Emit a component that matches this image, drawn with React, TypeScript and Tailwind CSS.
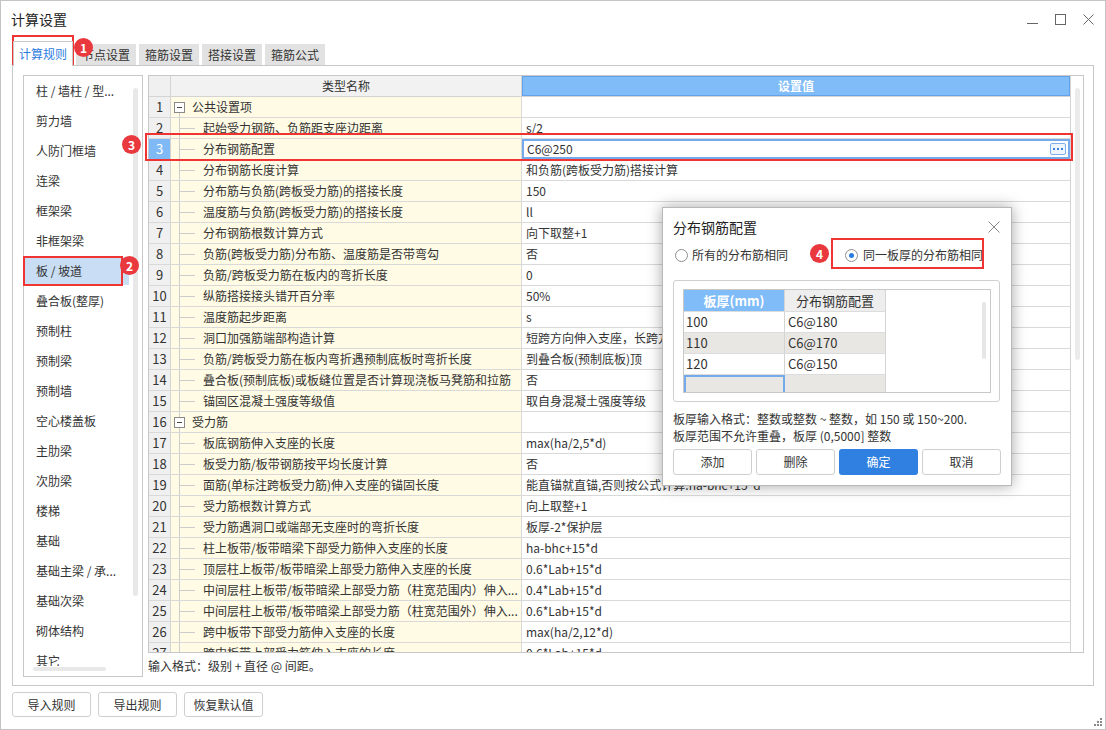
import React from 'react';

type Row = { name: string; value: string; group?: boolean };

const rows: Row[] = [
  { name: '公共设置项', value: '', group: true },
  { name: '起始受力钢筋、负筋距支座边距离', value: 's/2' },
  { name: '分布钢筋配置', value: 'C6@250' },
  { name: '分布钢筋长度计算', value: '和负筋(跨板受力筋)搭接计算' },
  { name: '分布筋与负筋(跨板受力筋)的搭接长度', value: '150' },
  { name: '温度筋与负筋(跨板受力筋)的搭接长度', value: 'll' },
  { name: '分布钢筋根数计算方式', value: '向下取整+1' },
  { name: '负筋(跨板受力筋)分布筋、温度筋是否带弯勾', value: '否' },
  { name: '负筋/跨板受力筋在板内的弯折长度', value: '0' },
  { name: '纵筋搭接接头错开百分率', value: '50%' },
  { name: '温度筋起步距离', value: 's' },
  { name: '洞口加强筋端部构造计算', value: '短跨方向伸入支座，长跨方向伸入支座' },
  { name: '负筋/跨板受力筋在板内弯折遇预制底板时弯折长度', value: '到叠合板(预制底板)顶' },
  { name: '叠合板(预制底板)或板缝位置是否计算现浇板马凳筋和拉筋', value: '否' },
  { name: '锚固区混凝土强度等级值', value: '取自身混凝土强度等级' },
  { name: '受力筋', value: '', group: true },
  { name: '板底钢筋伸入支座的长度', value: 'max(ha/2,5*d)' },
  { name: '板受力筋/板带钢筋按平均长度计算', value: '否' },
  { name: '面筋(单标注跨板受力筋)伸入支座的锚固长度', value: '能直锚就直锚,否则按公式计算:ha-bhc+15*d' },
  { name: '受力筋根数计算方式', value: '向上取整+1' },
  { name: '受力筋遇洞口或端部无支座时的弯折长度', value: '板厚-2*保护层' },
  { name: '柱上板带/板带暗梁下部受力筋伸入支座的长度', value: 'ha-bhc+15*d' },
  { name: '顶层柱上板带/板带暗梁上部受力筋伸入支座的长度', value: '0.6*Lab+15*d' },
  { name: '中间层柱上板带/板带暗梁上部受力筋（柱宽范围内）伸入...', value: '0.4*Lab+15*d' },
  { name: '中间层柱上板带/板带暗梁上部受力筋（柱宽范围外）伸入...', value: '0.6*Lab+15*d' },
  { name: '跨中板带下部受力筋伸入支座的长度', value: 'max(ha/2,12*d)' },
  { name: '跨中板带上部受力筋伸入支座的长度', value: '0.6*Lab+15*d' },
];

const sideItems = [
  '柱 / 墙柱 / 型...',
  '剪力墙',
  '人防门框墙',
  '连梁',
  '框架梁',
  '非框架梁',
  '板 / 坡道',
  '叠合板(整厚)',
  '预制柱',
  '预制梁',
  '预制墙',
  '空心楼盖板',
  '主肋梁',
  '次肋梁',
  '楼梯',
  '基础',
  '基础主梁 / 承...',
  '基础次梁',
  '砌体结构',
  '其它',
];

const tabs = ['计算规则', '节点设置', '箍筋设置', '搭接设置', '箍筋公式'];

const slabRows = [
  { t: '100', v: 'C6@180' },
  { t: '110', v: 'C6@170' },
  { t: '120', v: 'C6@150' },
  { t: '', v: '' },
];

function Badge({ n, className }: { n: number; className: string }) {
  return (
    <div
      className={`absolute w-[19px] h-[19px] rounded-full bg-[#e9383e] text-white text-[12px] font-bold leading-none flex items-center justify-center ${className}`}
    >
      {n}
    </div>
  );
}

function NameCell({ row, first }: { row: Row; first: boolean }) {
  if (row.group) {
    return (
      <div className="flex h-full items-stretch">
        <div className="ml-[3px] w-[11px] flex flex-col items-center">
          <div className={`flex-1 w-0 ${first ? '' : 'border-l border-[#cccccc]'}`} />
          <div className="w-[11px] h-[11px] shrink-0 border border-[#8a8a8a] bg-white flex items-center justify-center">
            <div className="w-[5px] border-t border-[#444]" />
          </div>
          <div className="flex-1 w-0 border-l border-[#cccccc]" />
        </div>
        <span className="ml-[7px] self-center whitespace-nowrap">{row.name}</span>
      </div>
    );
  }
  return (
    <div className="flex h-full items-stretch min-w-0">
      <div className="ml-[8px] w-[16px] shrink-0 border-l border-[#cccccc] flex items-center">
        <div className="w-full border-t border-[#cccccc]" />
      </div>
      <span className="ml-[8px] self-center whitespace-nowrap overflow-hidden">{row.name}</span>
    </div>
  );
}

export default function App() {
  return (
    <div className="relative w-[1106px] h-[730px] bg-white border border-[#c4c4c4] overflow-hidden text-[#333] text-[12px] font-['Noto_Sans_CJK_SC','Noto_Sans',sans-serif]">
      {/* title bar */}
      <div className="h-[40px] flex items-start justify-between">
        <div className="pl-[10px] pt-[9px] text-[14px] leading-[18px] text-[#222]">计算设置</div>
        <div className="flex items-center gap-[17px] pr-[11px] pt-[13px]">
          <svg width="11" height="11" viewBox="0 0 11 11">
            <line x1="0" y1="9.5" x2="11" y2="9.5" stroke="#666" strokeWidth="1" />
          </svg>
          <svg width="11" height="11" viewBox="0 0 11 11">
            <rect x="0.5" y="0.5" width="10" height="10" fill="none" stroke="#666" strokeWidth="1" />
          </svg>
          <svg width="11" height="11" viewBox="0 0 11 11">
            <path d="M0.5 0.5 L10.5 10.5 M10.5 0.5 L0.5 10.5" stroke="#666" strokeWidth="1" />
          </svg>
        </div>
      </div>

      {/* tabs */}
      <div className="h-[24px] flex items-end gap-[3px] pl-[12px]">
        {tabs.map((t, i) =>
          i === 0 ? (
            <div
              key={t}
              className="relative z-10 w-[60px] h-[25px] -mb-[1px] bg-white border-l border-t border-r border-[#c8c8c8] flex items-center justify-center text-[#2b7ce0]"
            >
              {t}
            </div>
          ) : (
            <div key={t} className="w-[60px] h-[21px] bg-[#e2e2e2] flex items-center justify-center">
              {t}
            </div>
          )
        )}
      </div>

      {/* panel */}
      <div className="ml-[11px] w-[1082px] h-[621px] border border-[#c8c8c8] flex gap-[5px] pl-[10px] pt-[9px]">
        {/* sidebar */}
        <div className="w-[120px] h-[602px] border border-[#c8c8c8] flex flex-col">
          <div className="flex flex-1 min-h-0">
            <div className="w-[105px] overflow-hidden pt-[1px]">
              {sideItems.map((s) => (
                <div
                  key={s}
                  className={`h-[28px] mb-[2px] flex items-center pl-[12px] whitespace-nowrap ${
                    s === '板 / 坡道' ? 'bg-[#c9def4]' : ''
                  }`}
                >
                  {s}
                </div>
              ))}
            </div>
            <div className="flex-1 pt-[12px] flex justify-center">
              <div className="w-[5px] h-[508px] rounded-full bg-[#e8e8e8]" />
            </div>
          </div>
          <div className="h-[10px] pl-[9px] pt-[1px]">
            <div className="w-[73px] h-[4px] rounded-full bg-[#e8e8e8]" />
          </div>
        </div>

        {/* right column */}
        <div className="flex flex-col">
          <div className="w-[936px] h-[578px] border border-[#c8c8c8] flex">
            <div className="w-[921px] flex flex-col overflow-hidden">
              {/* header */}
              <div className="h-[21px] shrink-0 flex border-b border-[#d4d4d4]">
                <div className="w-[22px] bg-[#f0f0f0] border-r border-[#d4d4d4]" />
                <div className="w-[351px] bg-[#f2f2f2] border-r border-[#d4d4d4] flex items-center justify-center">
                  类型名称
                </div>
                <div className="flex-1 bg-[#80bcf7] border border-[#62a2ea] flex items-center justify-center text-white font-bold">
                  设置值
                </div>
              </div>
              {/* rows */}
              {rows.map((r, i) => {
                const sel = i === 2;
                return (
                  <div key={i} className="h-[21px] shrink-0 flex border-b border-[#d9d9d9]">
                    <div
                      className={`w-[22px] shrink-0 border-r border-[#d4d4d4] flex items-center justify-center text-[13px] ${
                        sel ? 'bg-[#7fbaf6] text-white' : 'bg-[#f0f0f0]'
                      }`}
                    >
                      {i + 1}
                    </div>
                    <div className="w-[351px] shrink-0 bg-[#fffbe5] border-r border-[#d9d9d9] overflow-hidden">
                      <NameCell row={r} first={i === 0} />
                    </div>
                    {sel ? (
                      <div className="flex-1 min-w-0 border-2 border-[#74aaea] flex items-center justify-between pl-[3px] pr-[2px]">
                        <span>{r.value}</span>
                        <div className="w-[16px] h-[12px] rounded-[2px] border border-[#7db0ea] bg-[#eef5fd] flex items-center justify-center gap-[2px]">
                          <div className="w-[2px] h-[2px] bg-[#3a86de]" />
                          <div className="w-[2px] h-[2px] bg-[#3a86de]" />
                          <div className="w-[2px] h-[2px] bg-[#3a86de]" />
                        </div>
                      </div>
                    ) : (
                      <div className="flex-1 min-w-0 flex items-center pl-[4px] whitespace-nowrap overflow-hidden">
                        {r.value}
                      </div>
                    )}
                  </div>
                );
              })}
            </div>
            {/* vertical scrollbar */}
            <div className="w-[13px] border-l border-[#d4d4d4] pt-[12px] flex justify-center">
              <div className="w-[5px] h-[272px] rounded-full bg-[#ebebeb]" />
            </div>
          </div>
          <div className="mt-[6px] leading-[14px]">输入格式：级别 + 直径 @ 间距。</div>
        </div>
      </div>

      {/* bottom buttons */}
      <div className="mt-[6px] ml-[11px] flex gap-[7px]">
        {['导入规则', '导出规则', '恢复默认值'].map((b) => (
          <div
            key={b}
            className="w-[79px] h-[25px] border border-[#cfcfcf] rounded-[3px] bg-white flex items-center justify-center"
          >
            {b}
          </div>
        ))}
      </div>

      {/* resize grip */}
      <svg className="absolute right-[2px] bottom-[2px]" width="9" height="9" viewBox="0 0 9 9">
        <rect x="6" y="0" width="2" height="2" fill="#8a8a8a" />
        <rect x="3" y="3" width="2" height="2" fill="#8a8a8a" />
        <rect x="6" y="3" width="2" height="2" fill="#8a8a8a" />
        <rect x="0" y="6" width="2" height="2" fill="#8a8a8a" />
        <rect x="3" y="6" width="2" height="2" fill="#8a8a8a" />
        <rect x="6" y="6" width="2" height="2" fill="#8a8a8a" />
      </svg>

      {/* dialog */}
      <div className="absolute left-[661px] top-[206px] w-[350px] h-[279px] bg-white border border-[#b8b8b8] shadow-[0_0_14px_rgba(0,0,0,0.35)] flex flex-col">
        <div className="h-[38px] flex items-center justify-between pl-[10px] pr-[11px]">
          <span className="text-[14px] text-[#222]">分布钢筋配置</span>
          <svg width="12" height="12" viewBox="0 0 12 12">
            <path d="M0.5 0.5 L11.5 11.5 M11.5 0.5 L0.5 11.5" stroke="#8a8a8a" strokeWidth="1" />
          </svg>
        </div>
        <div className="h-[18px] flex items-center pl-[12px]">
          <div className="w-[13px] h-[13px] rounded-full border border-[#8f8f8f] bg-white" />
          <span className="ml-[4px]">所有的分布筋相同</span>
          <div className="ml-[57px] w-[13px] h-[13px] rounded-full border border-[#8f8f8f] bg-white flex items-center justify-center">
            <div className="w-[5px] h-[5px] rounded-full bg-[#2b7ce0]" />
          </div>
          <span className="ml-[5px]">同一板厚的分布筋相同</span>
        </div>
        <div className="mt-[16px] ml-[10px] w-[327px] h-[122px] border border-[#cfcfcf] rounded-[3px] pt-[8px] pl-[9px]">
          <div className="w-[308px] h-[104px] border border-[#c8c8c8] flex overflow-hidden">
            <div className="w-[202px] flex flex-col">
              <div className="h-[21px] shrink-0 flex">
                <div className="w-[101px] bg-[#80bcf7] border-r border-[#d4d4d4] flex items-center justify-center text-white font-bold text-[13px]">
                  板厚(mm)
                </div>
                <div className="w-[101px] bg-[#eeeeee] border-r border-[#d4d4d4] flex items-center justify-center text-[13px]">
                  分布钢筋配置
                </div>
              </div>
              {slabRows.map((r, i) => (
                <div
                  key={i}
                  className={`h-[21px] shrink-0 flex border-t border-[#dcdcdc] ${i % 2 === 1 ? 'bg-[#e9e7e4]' : 'bg-white'}`}
                >
                  <div
                    className={`w-[101px] flex items-center pl-[2px] text-[13px] ${
                      i === 3 ? 'border-2 border-[#74aaea]' : 'border-r border-[#d4d4d4]'
                    }`}
                  >
                    {r.t}
                  </div>
                  <div className="w-[101px] border-r border-[#d4d4d4] flex items-center pl-[3px] text-[13px]">{r.v}</div>
                </div>
              ))}
            </div>
            <div className="flex-1 flex justify-end pr-[4px] pt-[12px]">
              <div className="w-[4px] h-[57px] rounded-full bg-[#e6e6e6]" />
            </div>
          </div>
        </div>
        <div className="mt-[8px] pl-[10px] leading-[17px]">
          <div>板厚输入格式：整数或整数 ~ 整数，如 150 或 150~200.</div>
          <div>板厚范围不允许重叠，板厚 (0,5000] 整数</div>
        </div>
        <div className="mt-[5px] pl-[10px] flex gap-[4px]">
          {['添加', '删除', '确定', '取消'].map((b) => (
            <div
              key={b}
              className={`w-[79px] h-[26px] rounded-[3px] flex items-center justify-center ${
                b === '确定' ? 'bg-[#2f80e0] text-white' : 'border border-[#cfcfcf] bg-white'
              }`}
            >
              {b}
            </div>
          ))}
        </div>
      </div>

      {/* annotation boxes */}
      <div className="absolute left-[11px] top-[34px] w-[62px] h-[30px] border-2 border-[#f03333]" />
      <div className="absolute left-[22px] top-[255px] w-[100px] h-[30px] border-2 border-[#f03333]" />
      <div className="absolute left-[144px] top-[132px] w-[928px] h-[28px] border-2 border-[#f03333]" />
      <div className="absolute left-[830px] top-[237px] w-[153px] h-[31px] border-2 border-[#f03333]" />
      <Badge n={1} className="left-[73px] top-[37px]" />
      <Badge n={2} className="left-[119px] top-[255px]" />
      <Badge n={3} className="left-[121px] top-[134px]" />
      <Badge n={4} className="left-[809px] top-[243px]" />
    </div>
  );
}
